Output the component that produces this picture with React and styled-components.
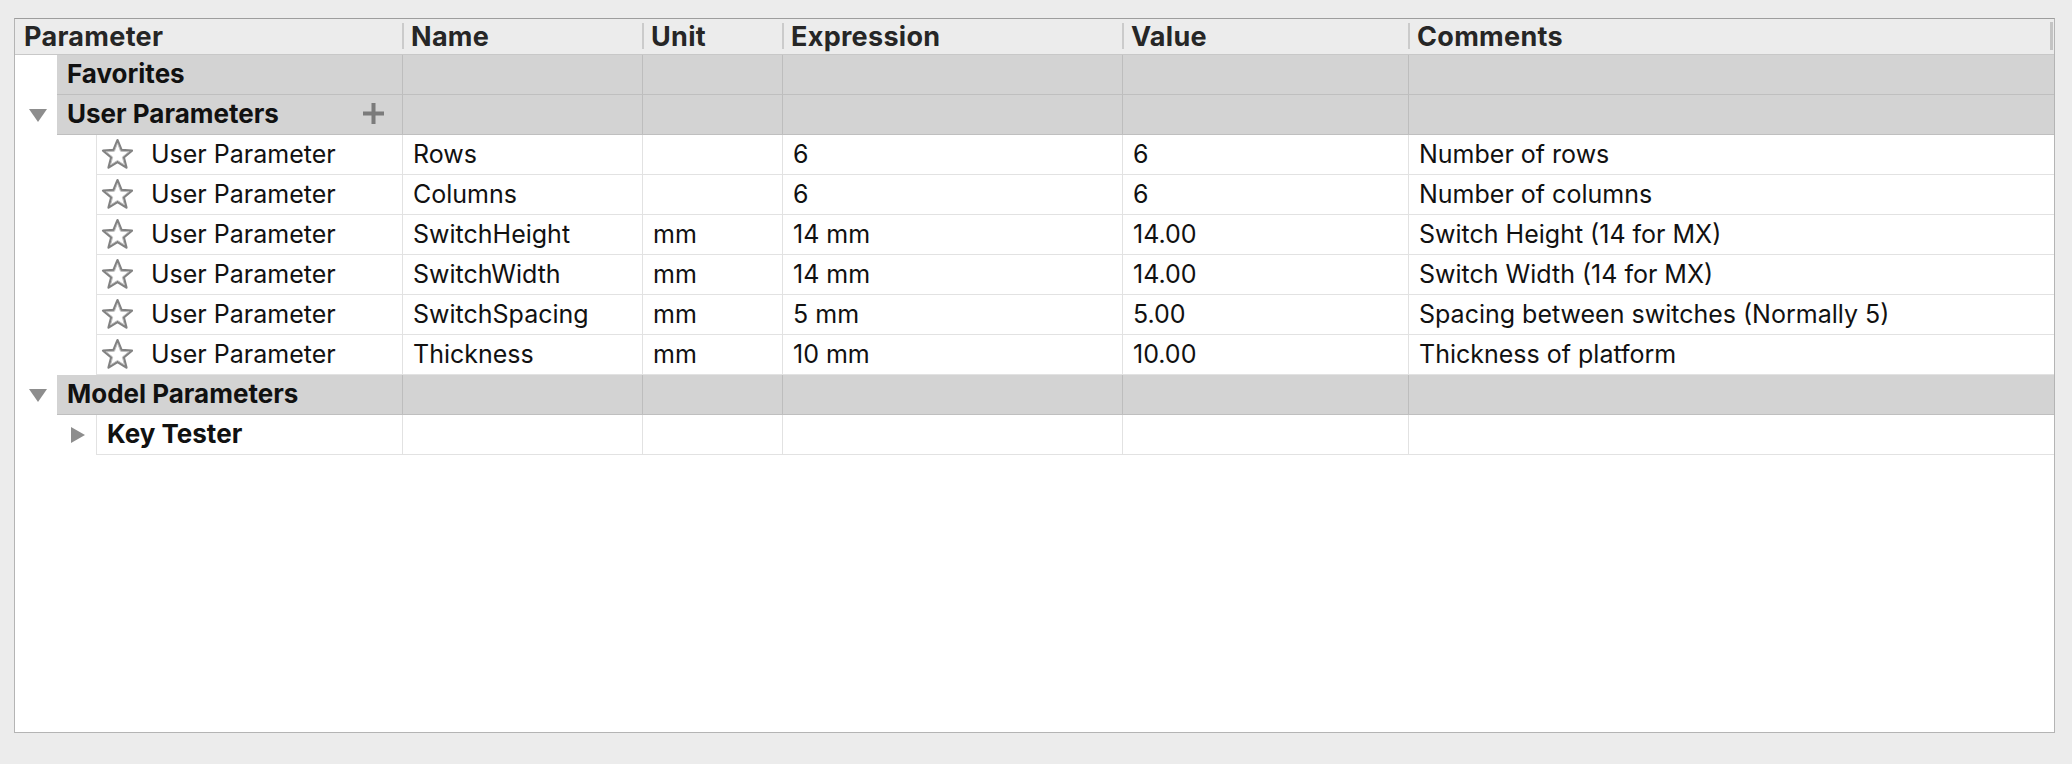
import React from 'react';
import styled, { createGlobalStyle, css } from 'styled-components';

const GlobalStyle = createGlobalStyle`
  html, body {
    margin: 0;
    padding: 0;
    background: #ececec;
  }
  body {
    font-family: Inter, "Noto Sans", "Liberation Sans", sans-serif;
    -webkit-font-smoothing: antialiased;
  }
`;

const TREE_WIDTH = 387; // parameter column, inside the panel border
const DATA_COLS = '240px 140px 340px 286px 1fr';

const userParams = [
  { name: 'Rows', unit: '', expr: '6', value: '6', comment: 'Number of rows' },
  { name: 'Columns', unit: '', expr: '6', value: '6', comment: 'Number of columns' },
  { name: 'SwitchHeight', unit: 'mm', expr: '14 mm', value: '14.00', comment: 'Switch Height (14 for MX)' },
  { name: 'SwitchWidth', unit: 'mm', expr: '14 mm', value: '14.00', comment: 'Switch Width (14 for MX)' },
  { name: 'SwitchSpacing', unit: 'mm', expr: '5 mm', value: '5.00', comment: 'Spacing between switches (Normally 5)' },
  { name: 'Thickness', unit: 'mm', expr: '10 mm', value: '10.00', comment: 'Thickness of platform' },
];

const Page = styled.div`
  height: 764px;
  box-sizing: border-box;
  padding: 18px 17px 31px 14px;
  display: flex;
`;

const Panel = styled.div`
  flex: 1;
  background: #fff;
  border: 1px solid #b4b4b4;
  border-top-color: #9d9d9d;
  display: flex;
  flex-direction: column;
  overflow: hidden;
`;

const HeaderRow = styled.div`
  display: grid;
  grid-template-columns: ${TREE_WIDTH}px ${DATA_COLS};
  height: 35px;
  background: #ececec;
  border-bottom: 1px solid #c8c8c8;
`;

const HeaderCell = styled.div`
  display: flex;
  align-items: center;
  font-size: 27px;
  font-weight: 700;
  color: #262626;
  letter-spacing: 0.3px;
  padding-left: ${({ $first }) => ($first ? '9px' : '0')};
  padding-bottom: 1px;

  ${({ $first }) =>
    !$first &&
    css`
      &::before {
        content: '';
        width: 2px;
        height: 26px;
        background: #cbcbcb;
        margin-right: 7px;
      }
    `}

  ${({ $last }) =>
    $last &&
    css`
      &::after {
        content: '';
        width: 3px;
        height: 28px;
        background: #c4c4c4;
        margin-left: auto;
        margin-right: 1px;
      }
    `}
`;

const Row = styled.div`
  display: flex;
  height: 40px;
  flex-shrink: 0;
`;

const Gutter = styled.div`
  width: ${({ $width }) => $width}px;
  flex-shrink: 0;
  box-sizing: border-box;
  display: flex;
  align-items: center;
  padding-left: ${({ $pad }) => $pad}px;
`;

const Body = styled.div`
  flex: 1;
  display: grid;
  box-sizing: border-box;
  grid-template-columns: ${({ $tree }) => $tree}px ${DATA_COLS};

  ${({ $group }) =>
    $group
      ? css`
          background: #d3d3d3;
          border-bottom: 1px solid #bfbfbf;
          & > * + * {
            border-left: 1px solid #bdbdbd;
          }
        `
      : css`
          background: #fff;
          border-bottom: 1px solid #e2e2e2;
          border-left: 1px solid #e2e2e2;
          & > * + * {
            border-left: 1px solid #e2e2e2;
          }
        `}
`;

const Cell = styled.div`
  display: flex;
  align-items: center;
  padding-left: 10px;
  padding-bottom: 2px;
  font-size: 25px;
  color: #111;
  white-space: nowrap;
  overflow: hidden;
`;

const GroupLabel = styled(Cell)`
  font-size: 26px;
  font-weight: 700;
  color: #111;
  justify-content: space-between;
  padding-right: 18px;
`;

const ParamLabel = styled(Cell)`
  padding-left: 4px;
  gap: 17px;
`;

const ComponentLabel = styled(Cell)`
  font-size: 26px;
  font-weight: 700;
`;

const DownArrow = () => (
  <svg width="18" height="13" viewBox="0 0 18 13">
    <polygon points="0,0 18,0 9,13" fill="#8d8d8d" />
  </svg>
);

const RightArrow = () => (
  <svg width="14" height="16" viewBox="0 0 14 16">
    <polygon points="0,0 14,8 0,16" fill="#8d8d8d" />
  </svg>
);

const PlusIcon = () => (
  <svg width="21" height="21" viewBox="0 0 21 21">
    <rect x="8.5" y="0" width="4" height="21" fill="#7b7b7b" />
    <rect x="0" y="8.5" width="21" height="4" fill="#7b7b7b" />
  </svg>
);

const StarIcon = () => (
  <svg width="33" height="32" viewBox="0 0 24 23">
    <polygon
      points="12,1.4 14.9,8.6 22.5,9.1 16.6,14 18.5,21.4 12,17.3 5.5,21.4 7.4,14 1.5,9.1 9.1,8.6"
      fill="#fff"
      stroke="#828282"
      strokeWidth="1.7"
      strokeLinejoin="round"
    />
    <polygon
      points="12,3.6 14.2,9.5 20.2,9.9 15.5,13.7 17,19.4 12,16.2 7,19.4 8.5,13.7 3.8,9.9 9.8,9.5"
      fill="none"
      stroke="#bdbdbd"
      strokeWidth="0.7"
      strokeLinejoin="round"
    />
  </svg>
);

const EmptyCells = () => (
  <>
    <Cell />
    <Cell />
    <Cell />
    <Cell />
    <Cell />
  </>
);

const GroupRow = ({ label, open, onAdd }) => (
  <Row>
    <Gutter $width={42} $pad={14}>{open && <DownArrow />}</Gutter>
    <Body $group $tree={TREE_WIDTH - 42}>
      <GroupLabel>
        <span>{label}</span>
        {onAdd && <PlusIcon />}
      </GroupLabel>
      <EmptyCells />
    </Body>
  </Row>
);

const ParamRow = ({ param }) => (
  <Row>
    <Gutter $width={81} />
    <Body $tree={TREE_WIDTH - 81 - 1}>
      <ParamLabel>
        <StarIcon />
        <span>User Parameter</span>
      </ParamLabel>
      <Cell>{param.name}</Cell>
      <Cell>{param.unit}</Cell>
      <Cell>{param.expr}</Cell>
      <Cell>{param.value}</Cell>
      <Cell>{param.comment}</Cell>
    </Body>
  </Row>
);

const ComponentRow = ({ label }) => (
  <Row>
    <Gutter $width={81} $pad={56}>
      <RightArrow />
    </Gutter>
    <Body $tree={TREE_WIDTH - 81 - 1}>
      <ComponentLabel>{label}</ComponentLabel>
      <EmptyCells />
    </Body>
  </Row>
);

const headers = ['Parameter', 'Name', 'Unit', 'Expression', 'Value', 'Comments'];

const App = () => (
  <>
    <GlobalStyle />
    <Page>
      <Panel>
        <HeaderRow>
          {headers.map((h, i) => (
            <HeaderCell key={h} $first={i === 0} $last={i === headers.length - 1}>
              {h}
            </HeaderCell>
          ))}
        </HeaderRow>
        <GroupRow label="Favorites" />
        <GroupRow label="User Parameters" open onAdd />
        {userParams.map((p) => (
          <ParamRow key={p.name} param={p} />
        ))}
        <GroupRow label="Model Parameters" open />
        <ComponentRow label="Key Tester" />
      </Panel>
    </Page>
  </>
);

export default App;
